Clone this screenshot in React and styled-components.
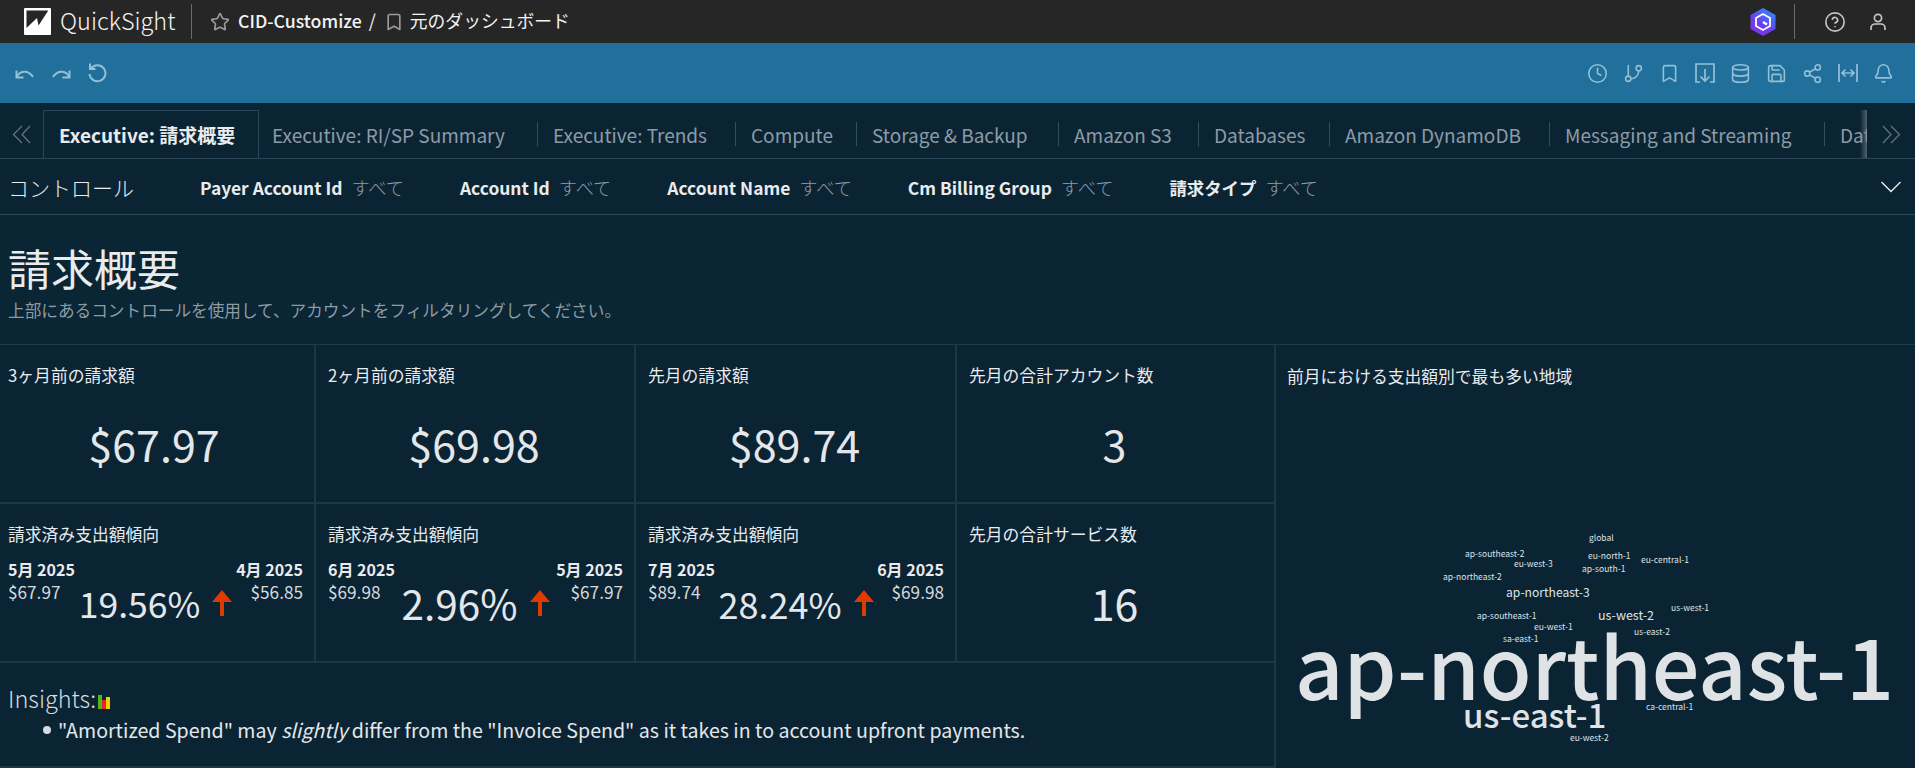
import React from "react";
import styled, { createGlobalStyle } from "styled-components";
import { Star, Bookmark, CircleHelp, Clock, GitBranch, Database, Save, Share2, Bell } from "lucide-react";

const FONT = '"Noto Sans CJK JP", "Noto Sans", sans-serif';

const GlobalStyle = createGlobalStyle`
    html, body {
        margin: 0;
        padding: 0;
        background: #0b2434;
        font-family: ${FONT};
        overflow: hidden;
    }
`;

const Page = styled.div`
    width: 1915px;
    height: 768px;
    overflow: hidden;
    display: flex;
    flex-direction: column;
`;

/* 顶部黑色导航 */
const TopBar = styled.header`
    height: 43px;
    flex: none;
    background: #262626;
    color: #f2f3f3;
    display: flex;
    align-items: center;
    padding-left: 24px;
`;
const Brand = styled.span`
    font-size: 23.5px;
    font-weight: 300;
    margin-left: 9px;
    width: 113px;
    padding-bottom: 3px;
    white-space: nowrap;
`;
const TopDivider = styled.div`
    width: 1px;
    height: 35px;
    background: #6a6a6a;
    margin: ${p => p.$margin};
`;
const Crumb = styled.span`
    font-size: ${p => p.$size || 17.7}px;
    font-weight: ${p => p.$weight || 400};
    margin: ${p => p.$margin || 0};
    padding-bottom: 4px;
    white-space: nowrap;
`;
const TopRight = styled.div`
    margin-left: auto;
    display: flex;
    align-items: center;
    color: #c4c4c4;
`;
const Spacer = styled.span`
    width: ${p => p.$width}px;
`;

/* 蓝色工具栏 */
const ActionBar = styled.div`
    height: 60px;
    flex: none;
    background: #20709b;
    color: #93c0d6;
    display: flex;
    align-items: center;
    padding: 0 21px 0 15px;
`;
const ActionGroup = styled.div`
    display: flex;
    align-items: center;
    gap: ${p => p.$gap}px;
    margin-left: ${p => p.$auto ? "auto" : 0};
`;

/* 标签行 */
const TabRow = styled.nav`
    height: 56px;
    flex: none;
    box-sizing: border-box;
    border-bottom: 1px solid #2b4656;
    display: flex;
    align-items: flex-end;
    position: relative;
`;
const TabArrow = styled.div`
    flex: none;
    width: ${p => p.$width}px;
    height: 47px;
    color: #5d7483;
    display: flex;
    align-items: center;
    justify-content: center;
`;
const TabScroll = styled.div`
    width: 1824px;
    flex: none;
    height: 48px;
    overflow: hidden;
    display: flex;
    position: relative;
    &::after {
        content: "";
        position: absolute;
        right: 0;
        top: 0;
        bottom: 0;
        width: 7px;
        background: linear-gradient(to right, rgba(120, 140, 150, 0), rgba(120, 140, 150, 0.6));
    }
`;
const Tab = styled.div`
    flex: none;
    box-sizing: border-box;
    width: ${p => p.$width}px;
    height: 48px;
    font-size: 19px;
    white-space: nowrap;
    display: flex;
    align-items: center;
    position: relative;
    ${p => p.$active ? `
        color: #e9ebed;
        font-weight: 700;
        padding-left: 15px;
        border: 1px solid #2b4656;
        border-bottom: 1px solid #0b2434;
        height: 49px;
    ` : `
        color: #8d9ba5;
        padding-left: ${p.$inset || 15}px;
    `}
    ${p => p.$divider ? `
        &::after {
            content: "";
            position: absolute;
            right: 0;
            top: 12px;
            height: 24px;
            width: 1px;
            background: #33505f;
        }
    ` : ""}
`;

/* 控件行 */
const ControlRow = styled.div`
    height: 56px;
    flex: none;
    box-sizing: border-box;
    border-bottom: 1px solid #2b4656;
    display: flex;
    align-items: center;
    padding: 0 14px 0 8px;
    color: #e9ebed;
`;
const ControlTitle = styled.span`
    font-size: 21px;
    font-weight: 300;
    width: 192px;
    flex: none;
`;
const Filter = styled.span`
    margin-right: 56px;
    white-space: nowrap;
    display: flex;
    align-items: baseline;
    gap: 9px;
`;
const FilterName = styled.b`
    font-size: 17.4px;
    font-weight: 700;
`;
const FilterValue = styled.span`
    font-size: 18.2px;
    font-weight: 300;
    color: #8d9ba5;
`;
const CollapseIcon = styled.svg`
    margin-left: auto;
`;

const Header = styled.div`
    height: 130px;
    flex: none;
    box-sizing: border-box;
    background: #0a2534;
    border-bottom: 1px solid #1f3a49;
    padding: 28px 8px 0;
`;
const Title = styled.h1`
    margin: 0;
    font-size: 43px;
    line-height: 48px;
    font-weight: 400;
    color: #e9ebed;
`;
const SubTitle = styled.p`
    margin: 7px 0 0;
    font-size: 16.65px;
    line-height: 24px;
    font-weight: 400;
    color: #8d9ba5;
    white-space: nowrap;
`;

/* 主体 */
const Body = styled.div`
    flex: 1;
    display: grid;
    grid-template-columns: 1276px 1fr;
    min-height: 0;
`;
const LeftArea = styled.div`
    display: grid;
    grid-template-columns: 316px 320px 321px 319px;
    grid-template-rows: 159px 159px 1fr;
`;
const Card = styled.section`
    box-sizing: border-box;
    border-right: 2px solid #1e3747;
    border-bottom: 2px solid #1e3747;
    padding: 20px 11px 0 ${p => p.$first ? 8 : 12}px;
    display: flex;
    flex-direction: column;
    min-width: 0;
    color: #e9ebed;
`;
const CardTitle = styled.div`
    font-size: 16.8px;
    line-height: 20px;
    white-space: nowrap;
`;
const BigValue = styled.div`
    font-size: 43px;
    line-height: 60px;
    text-align: center;
    margin-top: 28px;
    padding-right: 3px;
    color: #e4e7e9;
`;
const TrendGrid = styled.div`
    display: flex;
    justify-content: space-between;
    margin-top: 14px;
`;
const TrendSide = styled.div`
    text-align: ${p => p.$right ? "right" : "left"};
    flex: none;
`;
const TrendDate = styled.div`
    font-size: 16px;
    line-height: 22px;
    font-weight: 700;
`;
const TrendAmount = styled.div`
    font-size: 17.2px;
    line-height: 24px;
    color: #d5dade;
`;
const TrendMid = styled.div`
    align-self: flex-end;
    display: flex;
    align-items: center;
    gap: 12px;
    margin-bottom: -21px;
    color: #e4e7e9;
`;
const Percent = styled.span`
    font-size: ${p => p.$size}px;
    line-height: 44px;
`;
const Insights = styled.section`
    grid-column: 1 / span 4;
    box-sizing: border-box;
    border-right: 2px solid #1e3747;
    border-bottom: 2px solid #1e3747;
    padding: 19px 8px 0;
    color: #e4e7e9;
`;
const InsightTitle = styled.div`
    font-size: 23.5px;
    line-height: 32px;
    font-weight: 300;
    display: flex;
    align-items: center;
    color: #d5dade;
`;
const InsightList = styled.ul`
    margin: 1px 0 0;
    padding: 0 0 0 50px;
    list-style: none;
`;
const InsightItem = styled.li`
    font-size: 19.6px;
    line-height: 30px;
    white-space: nowrap;
    position: relative;
    &::before {
        content: "";
        position: absolute;
        left: -15px;
        top: 11px;
        width: 8px;
        height: 8px;
        border-radius: 50%;
        background: #d5dade;
    }
`;

const CloudPanel = styled.section`
    position: relative;
    padding: 21px 11px;
    color: #e9ebed;
`;
const Word = styled.span`
    position: absolute;
    font-size: ${p => p.$size}px;
    font-weight: ${p => p.$size > 30 ? 500 : 400};
    line-height: 1;
    white-space: nowrap;
    color: #dfe3e6;
    transform: translateY(-50%);
`;

const WORDS = [
    ["global", 1589, 537, 8.5],
    ["ap-southeast-2", 1465, 553, 8.5],
    ["eu-west-3", 1514, 563, 8.5],
    ["eu-north-1", 1588, 555, 8.5],
    ["eu-central-1", 1641, 559, 8.5],
    ["ap-south-1", 1582, 568, 8.5],
    ["ap-northeast-2", 1443, 576, 8.5],
    ["ap-northeast-3", 1506, 592, 12.1],
    ["ap-southeast-1", 1477, 615, 8.5],
    ["us-west-2", 1598, 615, 12.5],
    ["us-west-1", 1671, 607, 8.5],
    ["eu-west-1", 1534, 626, 8.5],
    ["us-east-2", 1634, 631, 8.5],
    ["sa-east-1", 1503, 638, 8.5],
    ["ap-northeast-1", 1295, 663, 84.3],
    ["us-east-1", 1463, 714, 33],
    ["ca-central-1", 1646, 706, 8.5],
    ["eu-west-2", 1570, 737, 8.5],
];

const TABS = [
    ["Executive: RI/SP Summary", 279, 13],
    ["Executive: Trends", 198],
    ["Compute", 121],
    ["Storage & Backup", 202],
    ["Amazon S3", 140],
    ["Databases", 131],
    ["Amazon DynamoDB", 220],
    ["Messaging and Streaming", 275],
    ["Data Transfer", 120],
];

const FILTERS = ["Payer Account Id", "Account Id", "Account Name", "Cm Billing Group", "請求タイプ"];

const KPIS = [
    ["3ヶ月前の請求額", "$67.97"],
    ["2ヶ月前の請求額", "$69.98"],
    ["先月の請求額", "$89.74"],
    ["先月の合計アカウント数", "3"],
];

const TRENDS = [
    ["5月 2025", "$67.97", "19.56%", "4月 2025", "$56.85", 35.6],
    ["6月 2025", "$69.98", "2.96%", "5月 2025", "$67.97", 40.5],
    ["7月 2025", "$89.74", "28.24%", "6月 2025", "$69.98", 36],
];

const UndoIcon = ({ flip }) => (
    <svg width="20" height="20" viewBox="0 0 20 20" fill="none" stroke="currentColor" strokeWidth="2"
        style={flip ? { transform: "scaleX(-1)" } : undefined}>
        <path d="M2 14 C4 8 13 6 18 14" />
        <path d="M1.5 7.5 V14.5 H8.5" />
    </svg>
);

const ResetIcon = () => (
    <svg width="20" height="22" viewBox="0 0 20 22" fill="none" stroke="currentColor" strokeWidth="2">
        <path d="M4 6.5 A8 8 0 1 1 2.5 12" />
        <path d="M3 1.5 V7 H8.5" />
    </svg>
);

const ImportIcon = () => (
    <svg width="20" height="20" viewBox="0 0 20 20" fill="none" stroke="currentColor" strokeWidth="1.7">
        <path d="M5 19 H1 V1 H19 V19 H15" />
        <path d="M10 6 V18 M5.5 13.5 L10 18 L14.5 13.5" />
    </svg>
);

const FitIcon = () => (
    <svg width="20" height="20" viewBox="0 0 20 20" fill="none" stroke="currentColor" strokeWidth="1.7">
        <path d="M1 1 V19 M19 1 V19 M4.5 10 H15.5 M7.5 6.5 L4 10 L7.5 13.5 M12.5 6.5 L16 10 L12.5 13.5" />
    </svg>
);

const UserIcon = () => (
    <svg width="18" height="18" viewBox="0 0 18 18" fill="none" stroke="currentColor" strokeWidth="1.7">
        <circle cx="9" cy="5" r="3.6" />
        <path d="M2 17 V15 C2 12.5 4 11 6 11 H12 C14 11 16 12.5 16 15 V17" />
    </svg>
);

const DoubleChevron = ({ left }) => (
    <svg width="19" height="19" viewBox="0 0 19 19" fill="none" stroke="currentColor" strokeWidth="1.3"
        style={left ? { transform: "scaleX(-1)" } : undefined}>
        <path d="M1 1 L9 9.5 L1 18 M9 1 L17.5 9.5 L9 18" />
    </svg>
);

const UpArrow = () => (
    <svg width="20" height="26" viewBox="0 0 20 26" fill="#dd3b00">
        <path d="M10 0 L20 12 H12 V26 H8 V12 H0 Z" />
    </svg>
);

const Logo = () => (
    <svg width="27" height="27" viewBox="0 0 27 27">
        <rect width="27" height="27" rx="1" fill="#fff" />
        <path d="M2.5 2.5 H24 V3 L14.5 17.5 L13 10 L2.5 20 Z" fill="#262626" />
    </svg>
);

const HexLogo = () => (
    <svg width="26" height="28" viewBox="0 0 26 28">
        <defs>
            <linearGradient id="hexFill" x1="0.8" y1="0" x2="0.2" y2="1">
                <stop offset="0" stopColor="#2f8cff" />
                <stop offset="0.6" stopColor="#6a3df0" />
                <stop offset="1" stopColor="#8a2ee0" />
            </linearGradient>
        </defs>
        <path d="M13 0 L25.5 7 V21 L13 28 L0.5 21 V7 Z" fill="url(#hexFill)" />
        <path d="M13 6 L20 10 V18 L13 22 L6 18 V10 Z" fill="none" stroke="#fff" strokeWidth="1.8" />
        <path d="M13 14 L17 16.5" stroke="#fff" strokeWidth="2.4" />
    </svg>
);

const BarsEmoji = styled.svg`
    margin: 7px 0 0 2px;
`;

const App = () => {
    const stroke = { size: 21, strokeWidth: 1.8 };
    return <Page>
        <GlobalStyle />
        <TopBar>
            <Logo />
            <Brand>QuickSight</Brand>
            <TopDivider $margin="0 18px" />
            <Star size={20} color="#9a9a9a" strokeWidth={2} />
            <Crumb $weight={500} $margin="0 0 0 8px">CID-Customize</Crumb>
            <Crumb $margin="0 8px 0 7px" $size={18}>/</Crumb>
            <Bookmark size={20} color="#9a9a9a" strokeWidth={2} />
            <Crumb $size={17.8} $margin="0 0 0 6px">元のダッシュボード</Crumb>
            <TopRight>
                <HexLogo />
                <TopDivider $margin="0 29px 0 18px" />
                <CircleHelp size={22} strokeWidth={1.8} />
                <Spacer $width={23} />
                <UserIcon />
                <Spacer $width={28} />
            </TopRight>
        </TopBar>
        <ActionBar>
            <ActionGroup $gap={16}>
                <UndoIcon />
                <UndoIcon flip />
                <ResetIcon />
            </ActionGroup>
            <ActionGroup $gap={15} $auto>
                <Clock {...stroke} />
                <GitBranch {...stroke} />
                <Bookmark {...stroke} />
                <ImportIcon />
                <Database {...stroke} />
                <Save {...stroke} />
                <Share2 {...stroke} />
                <FitIcon />
                <Bell {...stroke} />
            </ActionGroup>
        </ActionBar>
        <TabRow>
            <TabArrow $width={43}><DoubleChevron left /></TabArrow>
            <TabScroll>
                <Tab $active $width={216}>Executive: 請求概要</Tab>
                {TABS.map(([label, width, inset], i) => (
                    <Tab key={label} $width={width} $inset={inset} $divider={i < TABS.length - 1}>{label}</Tab>
                ))}
            </TabScroll>
            <TabArrow $width={48}><DoubleChevron /></TabArrow>
        </TabRow>
        <ControlRow>
            <ControlTitle>コントロール</ControlTitle>
            {FILTERS.map(name => (
                <Filter key={name}>
                    <FilterName>{name}</FilterName>
                    <FilterValue>すべて</FilterValue>
                </Filter>
            ))}
            <CollapseIcon width="20" height="12" viewBox="0 0 20 12" fill="none" stroke="#e9ebed" strokeWidth="1.4">
                <path d="M0.5 1 L10 10.5 L19.5 1" />
            </CollapseIcon>
        </ControlRow>
        <Header>
            <Title>請求概要</Title>
            <SubTitle>上部にあるコントロールを使用して、アカウントをフィルタリングしてください。</SubTitle>
        </Header>
        <Body>
            <LeftArea>
                {KPIS.map(([label, value], i) => (
                    <Card key={label} $first={i === 0}>
                        <CardTitle>{label}</CardTitle>
                        <BigValue>{value}</BigValue>
                    </Card>
                ))}
                {TRENDS.map(([d1, a1, pct, d2, a2, size], i) => (
                    <Card key={d1} $first={i === 0}>
                        <CardTitle>請求済み支出額傾向</CardTitle>
                        <TrendGrid>
                            <TrendSide>
                                <TrendDate>{d1}</TrendDate>
                                <TrendAmount>{a1}</TrendAmount>
                            </TrendSide>
                            <TrendMid>
                                <Percent $size={size}>{pct}</Percent>
                                <UpArrow />
                            </TrendMid>
                            <TrendSide $right>
                                <TrendDate>{d2}</TrendDate>
                                <TrendAmount>{a2}</TrendAmount>
                            </TrendSide>
                        </TrendGrid>
                    </Card>
                ))}
                <Card>
                    <CardTitle>先月の合計サービス数</CardTitle>
                    <BigValue>16</BigValue>
                </Card>
                <Insights>
                    <InsightTitle>
                        Insights:
                        <BarsEmoji width="12" height="14" viewBox="0 0 12 14">
                            <rect x="0" y="0" width="4" height="14" fill="#4fb81c" />
                            <rect x="4" y="5" width="4" height="9" fill="#e8222e" />
                            <rect x="8" y="2" width="4" height="12" fill="#f0d000" />
                        </BarsEmoji>
                    </InsightTitle>
                    <InsightList>
                        <InsightItem>"Amortized Spend" may <i>slightly</i> differ from the "Invoice Spend" as it takes in to account upfront payments.</InsightItem>
                    </InsightList>
                </Insights>
            </LeftArea>
            <CloudPanel>
                <CardTitle>前月における支出額別で最も多い地域</CardTitle>
                {WORDS.map(([text, x, y, size]) => (
                    <Word key={text} $size={size} style={{ left: x - 1276, top: y - 345 }}>{text}</Word>
                ))}
            </CloudPanel>
        </Body>
    </Page>;
};

export default App;
